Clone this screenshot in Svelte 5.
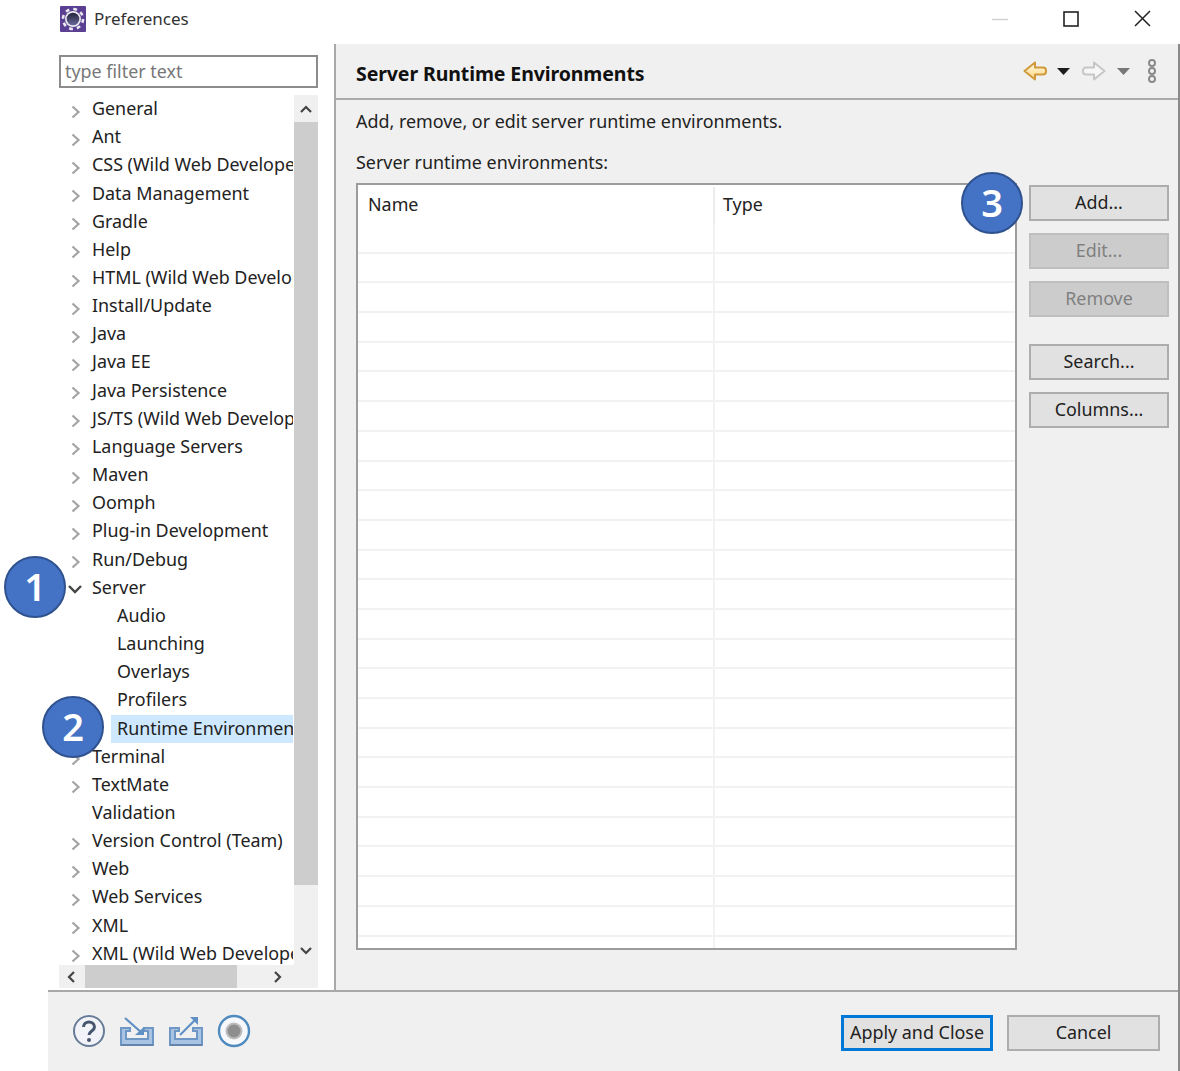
<script>
  const items = [
    ['General', 1], ['Ant', 1], ['CSS (Wild Web Developer)', 1], ['Data Management', 1], ['Gradle', 1], ['Help', 1],
    ['HTML (Wild Web Developer)', 1], ['Install/Update', 1], ['Java', 1], ['Java EE', 1], ['Java Persistence', 1],
    ['JS/TS (Wild Web Developer)', 1], ['Language Servers', 1], ['Maven', 1], ['Oomph', 1], ['Plug-in Development', 1],
    ['Run/Debug', 1], ['Server', 2], ['Audio', 3], ['Launching', 3], ['Overlays', 3], ['Profilers', 3],
    ['Runtime Environments', 4], ['Terminal', 1], ['TextMate', 1], ['Validation', 0], ['Version Control (Team)', 1],
    ['Web', 1], ['Web Services', 1], ['XML', 1], ['XML (Wild Web Developer)', 1]
  ];
  const rows = Array.from({ length: 25 }, (_, i) => i);
</script>

<div class="window">
  <header class="titlebar">
    <svg class="appicon" width="26" height="26" viewBox="0 0 26 26">
      <defs>
        <linearGradient id="core" x1="0" y1="0" x2="0" y2="1"><stop offset="0" stop-color="#23233a" /><stop offset="1" stop-color="#6a6a9c" /></linearGradient>
      </defs>
      <rect width="26" height="26" rx="1" fill="#5a3f92" />
      <circle cx="13" cy="13" r="10" fill="none" stroke="#e8e8ee" stroke-width="2.600" stroke-dasharray="3.800 4.050" />
      <circle cx="13" cy="13" r="8" fill="#e8e8ee" />
      <circle cx="13" cy="13" r="6.300" fill="url(#core)" />
    </svg>
    <span class="wintitle">Preferences</span>
    <div class="winbtns">
      <svg width="16" height="16" viewBox="0 0 16 16"><path d="M0 8.500h16" stroke="#d0d0d0" stroke-width="1.400" /></svg>
      <svg width="16" height="16" viewBox="0 0 16 16"><rect x="1" y="1" width="14" height="14" fill="none" stroke="#222" stroke-width="1.600" /></svg>
      <svg width="17" height="17" viewBox="0 0 17 17"><path d="M1 1l15 15M16 1L1 16" stroke="#222" stroke-width="1.500" /></svg>
    </div>
  </header>

  <div class="main">
    <aside class="side">
      <div class="filter">type filter text</div>
      <div class="treewrap">
        <div class="tree">
          {#each items as [label, kind]}
            <div class="row" class:child={kind >= 3}>
              {#if kind === 1}
                <svg class="tw" width="10" height="14" viewBox="0 0 10 14"><path d="M1.500 1.500l6 5.500-6 5.500" fill="none" stroke="#a4a4a4" stroke-width="2.200" /></svg>
              {:else if kind === 2}
                <svg class="tw open" width="14" height="10" viewBox="0 0 14 10"><path d="M1 2l6 6 6-6" fill="none" stroke="#444" stroke-width="2.400" /></svg>
              {:else if kind === 0}
                <span class="tw"></span>
              {/if}
              <span class="label" class:sel={kind === 4}>{label}</span>
            </div>
          {/each}
        </div>
        <div class="vbar">
          <div class="sbtn">
            <svg width="12" height="8" viewBox="0 0 12 8"><path d="M1 7l5-5 5 5" fill="none" stroke="#444" stroke-width="2.200" /></svg>
          </div>
          <div class="vthumb"></div>
          <div class="sbtn end">
            <svg width="12" height="8" viewBox="0 0 12 8"><path d="M1 1l5 5 5-5" fill="none" stroke="#444" stroke-width="2.200" /></svg>
          </div>
        </div>
      </div>
      <div class="hbar">
        <svg width="8" height="12" viewBox="0 0 8 12"><path d="M7 1L2 6l5 5" fill="none" stroke="#444" stroke-width="2.200" /></svg>
        <div class="hthumb"></div>
        <svg width="8" height="12" viewBox="0 0 8 12"><path d="M1 1l5 5-5 5" fill="none" stroke="#444" stroke-width="2.200" /></svg>
      </div>
    </aside>

    <section class="panel">
      <div class="phead">
        <h1>Server Runtime Environments</h1>
        <div class="tools">
          <svg width="24" height="20" viewBox="0 0 24 20">
            <defs>
              <linearGradient id="amber" x1="0" y1="0" x2="0" y2="1"><stop offset="0" stop-color="#fffbe8" /><stop offset="1" stop-color="#ffd67e" /></linearGradient>
            </defs>
            <path d="M1.500 10L12 1.500v5h8a3 3 0 0 1 3 3v1a3 3 0 0 1-3 3h-8v5z" fill="url(#amber)" stroke="#cf9a3c" stroke-width="2" stroke-linejoin="round" />
          </svg>
          <svg class="c1gap" width="13" height="7" viewBox="0 0 13 7"><path d="M0 0h13L6.500 7z" fill="#1c1c1c" /></svg>
          <svg class="fwd" width="24" height="20" viewBox="0 0 24 20"><path d="M22.500 10L12 1.500v5H4a3 3 0 0 0-3 3v1a3 3 0 0 0 3 3h8v5z" fill="#f6f6f6" stroke="#c6c6c6" stroke-width="2" stroke-linejoin="round" /></svg>
          <svg class="c2gap" width="13" height="7" viewBox="0 0 13 7"><path d="M0 0h13L6.500 7z" fill="#777" /></svg>
          <svg class="dots" width="10" height="26" viewBox="0 0 10 26"><g fill="#f4f4f4" stroke="#8a8a8a" stroke-width="2"><circle cx="5" cy="5" r="3" /><circle cx="5" cy="13" r="3" /><circle cx="5" cy="21" r="3" /></g></svg>
        </div>
      </div>
      <div class="pbody">
        <p class="desc">Add, remove, or edit server runtime environments.</p>
        <p class="cap">Server runtime environments:</p>
        <div class="content">
          <div class="table">
            <div class="thead"><span class="c1">Name</span><span class="c2">Type</span></div>
            {#each rows as r}
              <div class="trow"><span class="c1"></span><span class="c2"></span></div>
            {/each}
          </div>
          <div class="buttons">
            <button>Add...</button>
            <button class="dis">Edit...</button>
            <button class="dis">Remove</button>
            <button class="gap">Search...</button>
            <button>Columns...</button>
          </div>
        </div>
      </div>
    </section>
  </div>

  <footer class="footer">
    <div class="ficons">
      <svg width="34" height="34" viewBox="0 0 34 34">
        <circle cx="17" cy="17" r="15" fill="#f2f3f8" stroke="#687c98" stroke-width="2" />
        <path d="M11.500 13a5.500 5 0 0 1 11 0c0 4-5.500 4-5.500 8" fill="none" stroke="#46566f" stroke-width="3" />
        <circle cx="17" cy="26" r="2" fill="#46566f" />
      </svg>
      <svg width="36" height="32" viewBox="0 0 36 32">
        <path d="M2 13h9v3H7v8h22v-8h-4v-3h9v17H2z" fill="#a9c3e2" stroke="#6f97c6" stroke-width="2" />
        <path d="M2 30h32" stroke="#6484ae" stroke-width="2" />
        <path d="M6 3l17 15" stroke="#5f8fc4" stroke-width="2.200" />
        <path d="M25 12v8h-9z" fill="#5f8fc4" />
      </svg>
      <svg width="36" height="32" viewBox="0 0 36 32">
        <path d="M2 13h9v3H7v8h22v-8h-4v-3h9v17H2z" fill="#a9c3e2" stroke="#6f97c6" stroke-width="2" />
        <path d="M2 30h32" stroke="#6484ae" stroke-width="2" />
        <path d="M12 20L28 4" stroke="#5f8fc4" stroke-width="2.200" />
        <path d="M22 2h8v8z" fill="#5f8fc4" />
      </svg>
      <svg width="34" height="34" viewBox="0 0 34 34">
        <circle cx="17" cy="17" r="15" fill="#f6f8fb" stroke="#4f8abf" stroke-width="2.400" />
        <circle cx="17" cy="17" r="7.500" fill="#8e8e8e" stroke="#bcbcbc" stroke-width="2" />
      </svg>
    </div>
    <div class="fbtns">
      <button class="primary">Apply and Close</button>
      <button class="cancel">Cancel</button>
    </div>
  </footer>

  <div class="badge b1">1</div>
  <div class="badge b2">2</div>
  <div class="badge b3">3</div>
</div>

<style>
  :global(body) { margin: 0; background: #fff; }
  .window {
    position: relative; width: 1180px; height: 1071px; overflow: hidden; background: #fff;
    display: flex; flex-direction: column; color: #222;
    font-family: "Noto Sans", "Open Sans", sans-serif; font-size: 17.900px;
  }
  .titlebar { height: 44px; flex: none; display: flex; align-items: center; padding: 0 29px 7px 60px; box-sizing: border-box; }
  .appicon { margin-right: 8px; }
  .wintitle { font-size: 17px; color: #333; }
  .winbtns { margin-left: auto; display: flex; align-items: center; gap: 55px; }
  .main { flex: 1; min-height: 0; display: flex; margin-left: 48px; }
  .side { width: 286px; flex: none; background: #fff; padding: 11px 0 0 11px; box-sizing: border-box; display: flex; flex-direction: column; }
  .filter { width: 259px; height: 33px; box-sizing: border-box; border: 2px solid #8c8c8c; padding-left: 4px; line-height: 28px; color: #777; flex: none; }
  .treewrap { display: flex; width: 259px; height: 870px; margin-top: 7px; flex: none; overflow: hidden; }
  .tree { width: 234px; flex: none; overflow: hidden; margin-right: 1px; }
  .row { height: 28.170px; display: flex; align-items: center; white-space: nowrap; padding-left: 12px; }
  .row.child { padding-left: 58px; }
  .tw { width: 10px; flex: none; margin-right: 11px; margin-top: 5px; }
  .tw.open { width: 14px; margin-left: -3px; margin-right: 10px; margin-top: 2px; }
  .label { padding: 0 5px 1px 0; line-height: 27px; }
  .sel { background: #cde8ff; margin-left: -6px; padding-left: 6px; flex: 1; color: #222; }
  .vbar { width: 24px; flex: none; background: #f0f0f0; display: flex; flex-direction: column; }
  .sbtn { height: 27px; display: flex; align-items: center; justify-content: center; flex: none; }
  .sbtn.end { margin-top: auto; height: 80px; padding-top: 52px; box-sizing: border-box; }
  .vthumb { height: 763px; background: #cdcdcd; flex: none; }
  .hbar { width: 259px; height: 23px; flex: none; background: #f0f0f0; display: flex; align-items: center; padding: 0 8px; box-sizing: border-box; }
  .hthumb { width: 152px; height: 23px; background: #cdcdcd; margin-left: 10px; margin-right: 37px; }
  .panel { flex: 1; min-width: 0; background: #f0f0f0; border-left: 2px solid #a8a8a8; display: flex; flex-direction: column; }
  .phead { height: 56px; flex: none; box-sizing: border-box; border-bottom: 2px solid #ababab; display: flex; align-items: center; padding: 2px 23px 2px 20px; }
  h1 { margin: 0; font-size: 19.500px; font-weight: 700; color: #111; letter-spacing: -0.100px; padding-top: 4px; }
  .tools { margin-left: auto; display: flex; align-items: center; }
  .c1gap { margin-left: 10px; }
  .fwd { margin-left: 12px; }
  .c2gap { margin-left: 11px; }
  .dots { margin-left: 17px; }
  .pbody { flex: 1; padding: 7px 9px 0 20px; display: flex; flex-direction: column; }
  p { margin: 0; line-height: 28px; }
  .cap { margin-top: 13px; }
  .content { display: flex; margin-top: 7px; gap: 12px; }
  .table { width: 661px; height: 767px; box-sizing: border-box; border: 2px solid #9c9c9c; background: #fff; overflow: hidden; flex: none; }
  .thead { height: 39px; display: flex; box-sizing: border-box; padding-top: 2px; line-height: 34px; }
  .c1 { width: 357px; box-sizing: border-box; padding-left: 10px; border-right: 2px solid #ececec; flex: none; }
  .c2 { flex: 1; padding-left: 8px; }
  .trow { height: 29.700px; box-sizing: border-box; display: flex; border-bottom: 2px solid #f2f2f2; }
  .trow .c1 { border-right-color: #f2f2f2; }
  .buttons { display: flex; flex-direction: column; gap: 12px; padding-top: 2px; }
  button {
    font: inherit; color: #222; background: #e1e1e1; border: 2px solid #adadad; box-sizing: border-box;
    width: 140px; height: 36px; padding: 0 0 2px; margin: 0;
  }
  .dis { background: #cccccc; border-color: #bfbfbf; color: #808080; }
  .buttons .gap { margin-top: 15px; }
  .footer { height: 81px; flex: none; margin-left: 48px; background: #f0f0f0; border-top: 2px solid #a8a8a8; box-sizing: border-box; display: flex; padding: 0 20px 0 24px; }
  .ficons { display: flex; align-items: center; gap: 13px; height: 78px; }
  .fbtns { margin-left: auto; display: flex; gap: 14px; padding-top: 23px; }
  .primary { width: 152px; height: 36px; border: 3px solid #0078d7; padding: 0 0 2px; }
  .cancel { width: 153px; height: 36px; }
  .window::after { content: ""; position: absolute; right: 0; top: 44px; bottom: 0; width: 2px; background: #8a8a8a; }
  .badge {
    position: absolute; width: 62px; height: 62px; border-radius: 50%; box-sizing: border-box;
    background: #4472c4; border: 2px solid #2f528f; color: #fff; font-size: 38px; font-weight: 600;
    display: flex; align-items: center; justify-content: center; padding-bottom: 2px;
  }
  .b1 { left: 4px; top: 556px; }
  .b2 { left: 42px; top: 696px; }
  .b3 { left: 961px; top: 172px; }
</style>
